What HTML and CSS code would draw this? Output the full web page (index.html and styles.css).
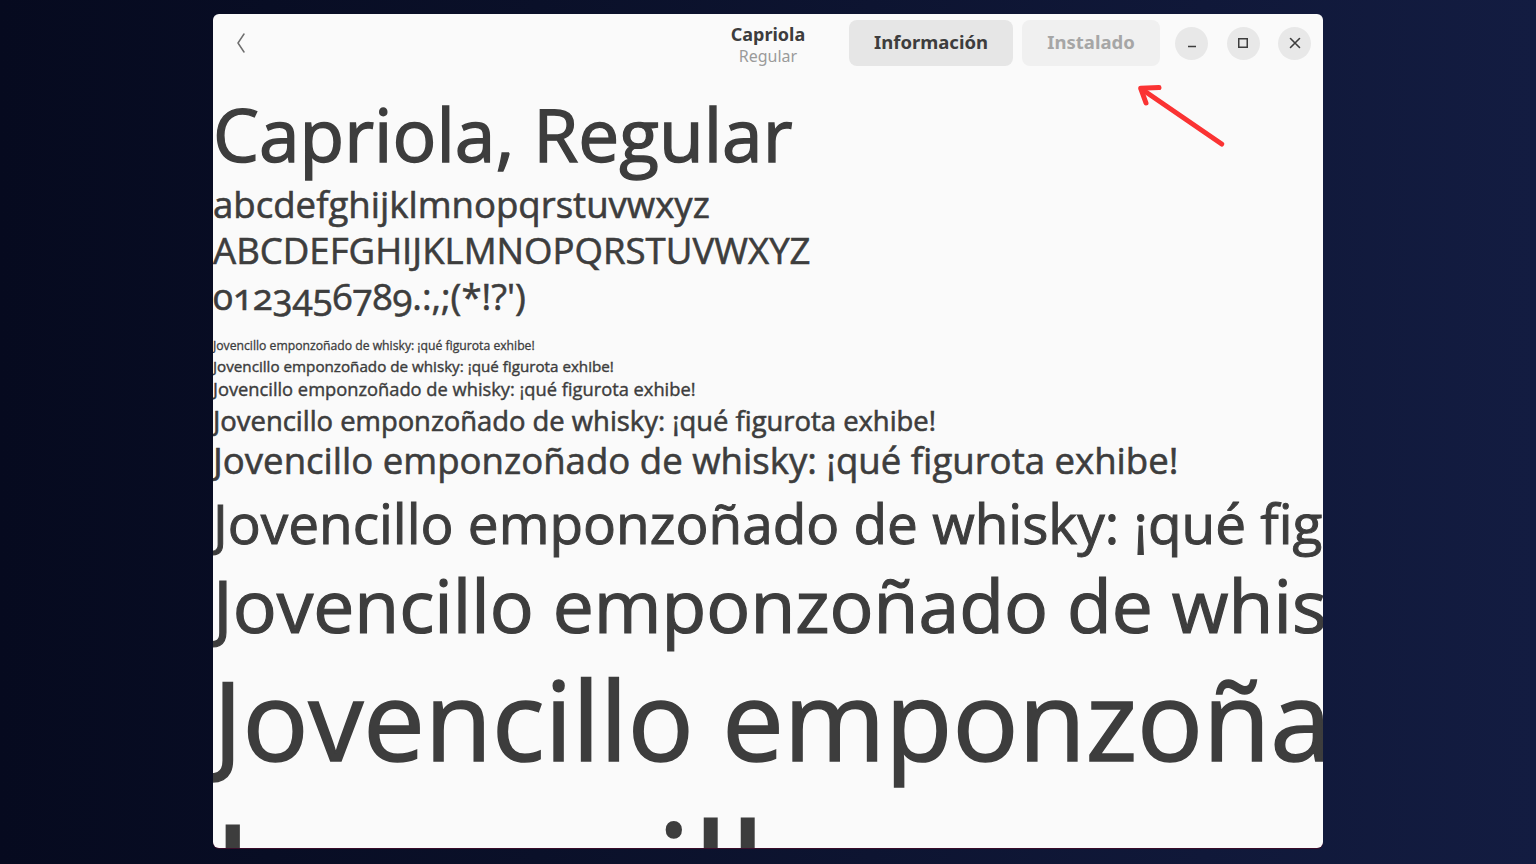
FILE: index.html
```html
<!DOCTYPE html>
<html lang="es">
<head>
<meta charset="utf-8">
<title>Capriola</title>
<link rel="stylesheet" href="styles.css">
</head>
<body>
<div class="window">
  <header class="bar">
    <div class="bar-left">
      <button class="back" aria-label="Atrás">
        <svg width="10" height="20" viewBox="0 0 10 20"><polyline points="8,1 2,10 8,19" fill="none" stroke="#6e6e6e" stroke-width="1.5" stroke-linecap="round" stroke-linejoin="round"/></svg>
      </button>
    </div>
    <div class="bar-title">
      <div class="t1">Capriola</div>
      <div class="t2">Regular</div>
    </div>
    <div class="bar-right">
      <button class="btn btn-info">Información</button>
      <button class="btn btn-installed">Instalado</button>
      <div class="controls">
        <button class="ctl" aria-label="Minimizar">
          <svg width="12" height="12" viewBox="0 0 12 12"><line x1="2" y1="9.5" x2="10" y2="9.5" stroke="#3d3d3d" stroke-width="1.5"/></svg>
        </button>
        <button class="ctl" aria-label="Maximizar">
          <svg width="12" height="12" viewBox="0 0 12 12"><rect x="1.75" y="1.75" width="8.5" height="8.5" fill="none" stroke="#3d3d3d" stroke-width="1.5"/></svg>
        </button>
        <button class="ctl" aria-label="Cerrar">
          <svg width="12" height="12" viewBox="0 0 12 12"><path d="M1.5 1.5 L10.5 10.5 M10.5 1.5 L1.5 10.5" stroke="#3d3d3d" stroke-width="1.6" stroke-linecap="round"/></svg>
        </button>
      </div>
    </div>
  </header>
  <main class="preview">
    <div class="title">Capriola, Regular</div>
    <div class="chars">abcdefghijklmnopqrstuvwxyz</div>
    <div class="chars">ABCDEFGHIJKLMNOPQRSTUVWXYZ</div>
    <div class="chars digits">0123456789.:,;(*!?')</div>
    <div class="samples">
      <div class="s s8">Jovencillo emponzoñado de whisky: ¡qué figurota exhibe!</div>
      <div class="s s10">Jovencillo emponzoñado de whisky: ¡qué figurota exhibe!</div>
      <div class="s s12">Jovencillo emponzoñado de whisky: ¡qué figurota exhibe!</div>
      <div class="s s18">Jovencillo emponzoñado de whisky: ¡qué figurota exhibe!</div>
      <div class="s s24">Jovencillo emponzoñado de whisky: ¡qué figurota exhibe!</div>
      <div class="s s36">Jovencillo emponzoñado de whisky: ¡qué figurota exhibe!</div>
      <div class="s s48">Jovencillo emponzoñado de whisky: ¡qué figurota exhibe!</div>
      <div class="s s72">Jovencillo emponzoñado de whisky: ¡qué figurota exhibe!</div>
      <div class="s s96">Jovencillo emponzoñado de whisky: ¡qué figurota exhibe!</div>
    </div>
  </main>
  <svg class="arrow" width="95" height="70" viewBox="0 0 95 70">
    <g fill="none" stroke="#fa3333" stroke-width="5" stroke-linecap="round" stroke-linejoin="round">
      <line x1="88.7" y1="62" x2="8.5" y2="7"/>
      <polyline points="26,5.5 7.7,6.3 13,21"/>
    </g>
  </svg>
</div>
</body>
</html>
```
FILE: styles.css
```css
* { box-sizing: border-box; }

html, body {
  margin: 0;
  height: 864px;
  overflow: hidden;
}

body {
  background: linear-gradient(to right, #060a1f 0%, #0a1029 35%, #131c41 100%);
  padding: 14px 0 0 213px;
}

.window {
  position: relative;
  width: 1110px;
  height: 834px;
  background: #fafafa;
  border-radius: 6px;
  overflow: hidden;
  box-shadow: 0 1px 0 #3a0c2a;
}

.bar {
  height: 58px;
  display: grid;
  grid-template-columns: 1fr auto 1fr;
  align-items: center;
  font-family: "Noto Sans", "Open Sans", sans-serif;
}

.bar-left {
  display: flex;
  align-items: center;
  padding-left: 22px;
}

.back {
  border: 0;
  background: none;
  padding: 0;
  width: 12px;
  height: 22px;
  display: flex;
  align-items: center;
  justify-content: center;
}

.bar-title {
  text-align: center;
  padding-top: 3px;
}

.t1 {
  font-size: 18px;
  font-weight: 700;
  color: #3d3d3d;
  line-height: 22px;
}

.t2 {
  font-size: 16px;
  color: #9a9a9a;
  line-height: 22px;
}

.bar-right {
  display: flex;
  align-items: center;
  justify-content: flex-end;
  padding-right: 12px;
  gap: 9px;
}

.btn {
  height: 46px;
  border: 0;
  border-radius: 8px;
  font-family: "Noto Sans", "Open Sans", sans-serif;
  font-size: 18.5px;
  font-weight: 700;
  padding: 0 0 3px;
  margin-top: 0;
}

.btn-info {
  width: 164px;
  background: #e6e6e6;
  color: #3d3d3d;
}

.btn-installed {
  width: 138px;
  background: #f0f0f0;
  color: #a6a6a6;
}

.controls {
  display: flex;
  align-items: center;
  gap: 18.5px;
  margin-left: 6px;
}

.ctl {
  width: 33px;
  height: 33px;
  border-radius: 50%;
  border: 0;
  background: #e8e8e8;
  padding: 0;
  display: flex;
  align-items: center;
  justify-content: center;
}

.preview {
  padding-top: 15px;
  font-family: "Open Sans", "Noto Sans", sans-serif;
  color: #3d3d3d;
  white-space: nowrap;
  -webkit-text-stroke: 0.6px #3d3d3d;
}

.title {
  font-size: 73px;
  line-height: 94px;
  -webkit-text-stroke: 1.4px #3d3d3d;
}

.chars {
  font-size: 36.6px;
  line-height: 46px;
}

.digits {
  font-variant-numeric: oldstyle-nums;
}

.samples {
  margin-top: 18px;
}

.s8  { font-size: 12.2px;  line-height: 18px; -webkit-text-stroke: 0.3px #3d3d3d; }
.s10 { font-size: 15.2px;  line-height: 22px; -webkit-text-stroke: 0.4px #3d3d3d; }
.s12 { font-size: 18.3px;  line-height: 24px; -webkit-text-stroke: 0.4px #3d3d3d; }
.s18 { font-size: 27.4px;  line-height: 40px; }
.s24 { font-size: 36.6px;  line-height: 39px; }
.s36 { font-size: 54.9px;  line-height: 86px; -webkit-text-stroke: 1px #3d3d3d; }
.s48 { font-size: 73.2px;  line-height: 78px; -webkit-text-stroke: 1.2px #3d3d3d; }
.s72 { font-size: 109.7px; line-height: 150px; -webkit-text-stroke: 1.6px #3d3d3d; }
.s96 { font-size: 146.3px; line-height: 160px; -webkit-text-stroke: 2px #3d3d3d; }

.arrow {
  position: absolute;
  left: 920px;
  top: 68px;
}
```
